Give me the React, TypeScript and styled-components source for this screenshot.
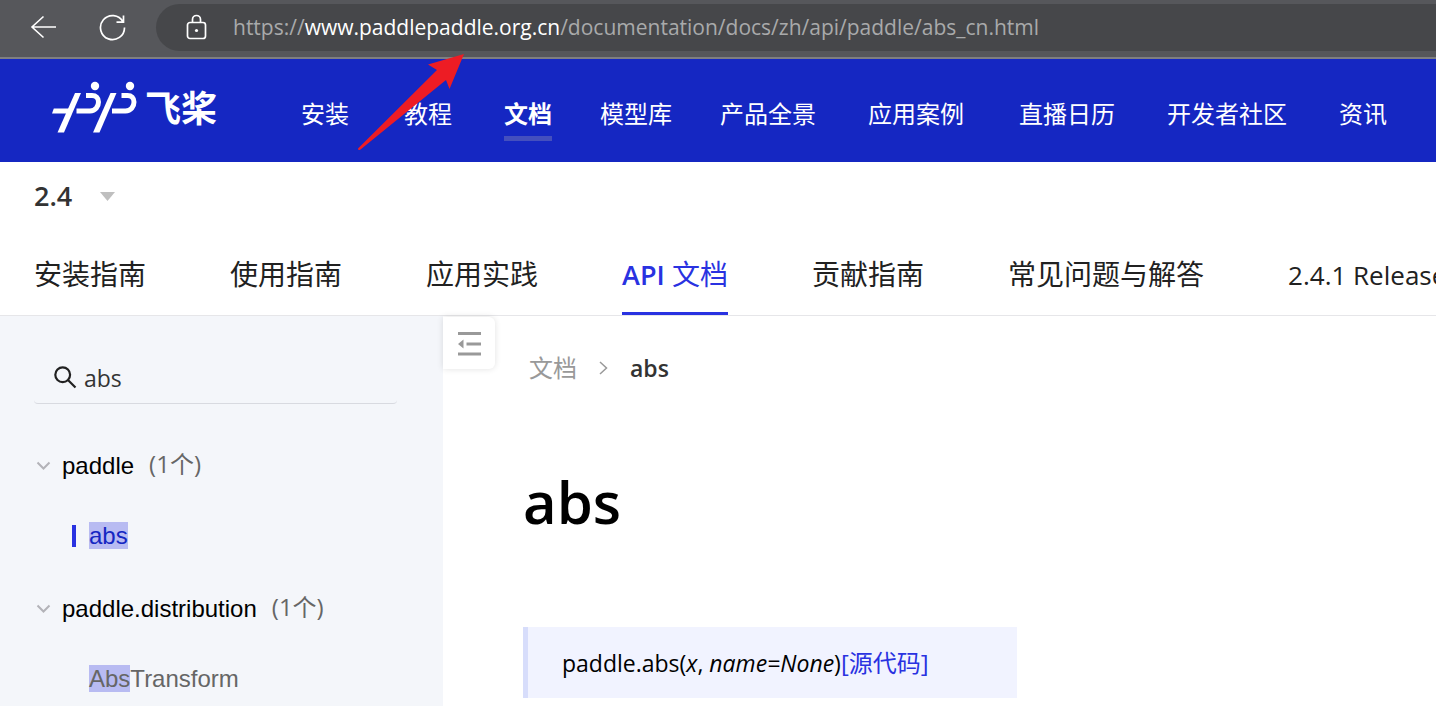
import React from 'react';
import styled, { createGlobalStyle } from 'styled-components';

const ui = '"Open Sans", "Noto Sans CJK SC", sans-serif';
const arial = '"Liberation Sans", "Noto Sans CJK SC", sans-serif';

const GlobalStyle = createGlobalStyle`
  *, *::before, *::after { box-sizing: border-box; }
  html, body, #root { height: 100%; }
  body {
    margin: 0;
    background: #fff;
    color: #212121;
    font-family: ${ui};
    overflow: hidden;
  }
  a { color: inherit; text-decoration: none; }
  button, input { font: inherit; color: inherit; }
  svg { display: block; }
`;

const Page = styled.div`
  display: flex;
  flex-direction: column;
  height: 100%;
  position: relative;
`;

const BrowserBar = styled.div`
  flex: none;
  display: flex;
  align-items: center;
  height: 59px;
  padding: 0 0 2px 29px;
  background: #56575b;
  border-bottom: 2px solid #7f7f81;
`;

const BarButton = styled.button`
  display: flex;
  align-items: center;
  flex: none;
  width: 69px;
  height: 40px;
  padding: 0 0 2px;
  border: 0;
  background: none;
  color: #fff;
`;

const AddressBox = styled.div`
  display: flex;
  align-items: center;
  flex: 1;
  min-width: 0;
  height: 47px;
  margin-left: -11px;
  padding: 0 0 2px 30px;
  gap: 26px;
  border-radius: 24px 0 0 24px;
  background: #46474a;
  color: #fff;
`;

const Address = styled.a`
  font-size: 21px;
  line-height: 32px;
  white-space: nowrap;
  color: #a9aaab;
`;

const Host = styled.span`
  color: #fff;
`;

const SiteHeader = styled.header`
  flex: none;
  display: flex;
  align-items: center;
  height: 103px;
  padding-left: 52px;
  background: #1527c2;
  color: #fff;
`;

const Brand = styled.a`
  display: flex;
  align-items: center;
  flex: none;
  width: 249px;
  gap: 8px;
  padding-bottom: 4px;
  font-size: 36px;
  line-height: 52px;
  font-weight: 700;
`;

const MainNav = styled.nav`
  display: grid;
  grid-template-columns: 103px 100px 96px 120px 148px 151px 148px 172px auto;
  padding-top: 14px;
`;

const MainLink = styled.a<{ $active?: boolean }>`
  justify-self: start;
  padding-bottom: 2px;
  font-size: 24px;
  line-height: 40px;
  white-space: nowrap;
  font-weight: ${(p) => (p.$active ? 700 : 400)};
  border-bottom: 5px solid ${(p) => (p.$active ? '#444fbe' : 'transparent')};
`;

const DocHeader = styled.div`
  flex: none;
  display: flex;
  flex-direction: column;
  height: 154px;
  padding-left: 34px;
  border-bottom: 1px solid #e6e6e9;
  overflow: hidden;
`;

const Version = styled.button`
  display: flex;
  align-items: center;
  align-self: flex-start;
  gap: 28px;
  height: 68px;
  padding: 0;
  border: 0;
  background: none;
  font-size: 27px;
  line-height: 36px;
  font-weight: 600;
  color: #333;
`;

const Tabs = styled.nav`
  display: flex;
  flex: 1;
  gap: 84px;
`;

const Tab = styled.a<{ $active?: boolean }>`
  flex: none;
  padding-top: 24px;
  font-size: 28px;
  line-height: 40px;
  white-space: nowrap;
  color: ${(p) => (p.$active ? '#2932e1' : '#212121')};
  border-bottom: 3px solid ${(p) => (p.$active ? '#2932e1' : 'transparent')};
`;

const Latin = styled.span<{ $strong?: boolean }>`
  font-size: ${(p) => (p.$strong ? 27 : 26)}px;
  font-weight: ${(p) => (p.$strong ? 600 : 400)};
`;

const Body = styled.div`
  display: flex;
  flex: 1;
  min-height: 0;
`;

const Sidebar = styled.aside`
  flex: none;
  width: 443px;
  padding: 36px 34px 0;
  background: #f4f6fa;
  overflow: hidden;
`;

const SearchBox = styled.label`
  display: flex;
  align-items: center;
  gap: 7px;
  width: 363px;
  height: 52px;
  padding-left: 20px;
  border-bottom: 1px solid #d8dae0;
  border-radius: 4px;
  color: #212121;
`;

const SearchInput = styled.input`
  flex: 1;
  min-width: 0;
  padding: 0;
  border: 0;
  outline: 0;
  background: none;
  font-size: 23px;
  line-height: 32px;
  color: #333;
`;

const Tree = styled.ul`
  margin: 0;
  padding: 26px 0 0;
  list-style: none;
  font-family: ${arial};
  font-size: 24px;
  line-height: 28px;
`;

const Group = styled.li`
  height: 143px;
`;

const GroupButton = styled.button`
  display: flex;
  align-items: center;
  height: 72px;
  padding: 0 0 0 2px;
  border: 0;
  background: none;
  color: #000;
`;

const GroupName = styled.span`
  margin-left: 11px;
`;

const Count = styled.span`
  margin-left: 15px;
  padding-bottom: 4px;
  font-family: ${ui};
  color: #666;
`;

const Leaf = styled.a<{ $active?: boolean }>`
  display: flex;
  align-items: center;
  height: 67px;
  padding-left: 38px;
  color: ${(p) => (p.$active ? '#1527c2' : '#666')};

  &::before {
    content: '';
    width: 4px;
    height: 22px;
    margin-right: 13px;
    background: ${(p) => (p.$active ? '#2932e1' : 'transparent')};
  }
`;

const Hit = styled.mark`
  background: #b8bbf2;
  color: inherit;
`;

const Content = styled.main`
  flex: 1;
  min-width: 0;
  display: flex;
  align-items: flex-start;
`;

const Collapse = styled.button`
  display: flex;
  align-items: center;
  justify-content: center;
  flex: none;
  width: 52px;
  height: 52px;
  margin-top: 1px;
  padding: 1px 1px 0 0;
  border: 0;
  border-radius: 0 6px 6px 0;
  background: #fff;
  box-shadow: 0 0 6px rgba(0, 0, 0, 0.12);
`;

const Article = styled.article`
  flex: 1;
  min-width: 0;
  padding: 36px 0 0 28px;
`;

const Crumbs = styled.nav`
  display: flex;
  align-items: center;
  gap: 21px;
  height: 32px;
  padding-left: 6px;
  font-size: 24px;
  line-height: 32px;
  color: #999;
`;

const Current = styled.span`
  font-size: 23px;
  font-weight: 600;
  color: #333;
`;

const Title = styled.h1`
  margin: 78px 0 0;
  font-size: 58px;
  line-height: 80px;
  font-weight: 600;
  color: #000;
`;

const Signature = styled.div`
  width: 494px;
  max-width: 100%;
  margin-top: 85px;
  padding: 16px 0 15px 34px;
  border-left: 5px solid #d7ddfb;
  background: #f1f3ff;
  font-size: 23px;
  line-height: 40px;
  white-space: nowrap;
  color: #000;
`;

const SourceLink = styled.a`
  font-size: 24px;
  color: #2932e1;
`;

const Pointer = styled.svg`
  position: absolute;
  left: 350px;
  top: 48px;
  pointer-events: none;
`;

const BackIcon = () => (
  <svg width="28" height="28" viewBox="0 0 28 28" fill="none" stroke="currentColor" strokeWidth="1.6">
    <path d="M27 14H3M14.5 3.5L3 14l11.5 10.5" />
  </svg>
);

const ReloadIcon = () => (
  <svg width="28" height="28" viewBox="0 0 28 28" fill="none" stroke="currentColor" strokeWidth="1.7">
    <path d="M26.5 14.5A12 12 0 1 1 25 8.8M25.5 2.5V9.2H18.5" />
  </svg>
);

const LockIcon = () => (
  <svg width="21" height="26" viewBox="0 0 21 26" fill="none" stroke="currentColor" strokeWidth="1.7">
    <rect x="1.5" y="8.5" width="18" height="16" rx="2.5" />
    <path d="M6.5 8.5V5.5a4 4 0 0 1 8 0v3" />
    <circle cx="10.5" cy="16.5" r="1.6" fill="currentColor" stroke="none" />
  </svg>
);

const BrandMark = () => (
  <svg width="85" height="56" viewBox="0 0 85 56" fill="none" stroke="#fff" strokeWidth="5">
    <path d="M0 32.500L1.800 27.500H17L15 32.500Z" fill="#fff" stroke="none" />
    <path d="M23 12H29L12 51.500H5.500Z" fill="#fff" stroke="none" />
    <path d="M58.500 12H64.500L47.500 51.500H41Z" fill="#fff" stroke="none" />
    <path d="M24.500 30H38C43.500 30 46.500 25.500 46.500 21C46.500 17 44 14.500 40 14.500H34" />
    <path d="M60 30H73.500C79 30 82 25.500 82 21C82 17 79.500 14.500 75.500 14.500H69.500" />
    <circle cx="43" cy="5" r="4.200" fill="#fff" stroke="none" />
    <circle cx="78" cy="5" r="4.200" fill="#fff" stroke="none" />
  </svg>
);

const CaretIcon = () => (
  <svg width="15" height="9" viewBox="0 0 15 9">
    <path d="M0 0H15L7.5 9Z" fill="#bfbfbf" />
  </svg>
);

const SearchIcon = () => (
  <svg width="23" height="23" viewBox="0 0 23 23" fill="none" stroke="currentColor" strokeWidth="2.2">
    <circle cx="8.7" cy="8.7" r="7.4" />
    <path d="M14 14L21.5 21.5" />
  </svg>
);

const ChevronDown = () => (
  <svg width="15" height="10" viewBox="0 0 15 10" fill="none" stroke="#b3b3b8" strokeWidth="2">
    <path d="M1.5 1.5L7.5 7.5L13.5 1.5" />
  </svg>
);

const ChevronRight = () => (
  <svg width="11" height="14" viewBox="0 0 11 14" fill="none" stroke="#999" strokeWidth="1.5">
    <path d="M2 1L8.5 7L2 13" />
  </svg>
);

const FoldIcon = () => (
  <svg width="24" height="24" viewBox="0 0 24 24" fill="#999">
    <path d="M1 0H24V3H1ZM9.5 10.5H24V13.5H9.5ZM1 20.500H24V23.5H1ZM1 12L6.500 7.500V16.500Z" />
  </svg>
);

const mainLinks = ['安装', '教程', '文档', '模型库', '产品全景', '应用案例', '直播日历', '开发者社区', '资讯'];

const groups = [
  { name: 'paddle', hit: 'abs', rest: '', active: true },
  { name: 'paddle.distribution', hit: 'Abs', rest: 'Transform', active: false },
];

export default function App() {
  return (
    <Page>
      <GlobalStyle />
      <BrowserBar>
        <BarButton aria-label="返回"><BackIcon /></BarButton>
        <BarButton aria-label="刷新"><ReloadIcon /></BarButton>
        <AddressBox>
          <LockIcon />
          <Address href="#">
            https://<Host>www.paddlepaddle.org.cn</Host>/documentation/docs/zh/api/paddle/abs_cn.html
          </Address>
        </AddressBox>
      </BrowserBar>
      <SiteHeader>
        <Brand href="#"><BrandMark />飞桨</Brand>
        <MainNav>
          {mainLinks.map((label) => (
            <MainLink key={label} href="#" $active={label === '文档'}>{label}</MainLink>
          ))}
        </MainNav>
      </SiteHeader>
      <DocHeader>
        <Version>2.4<CaretIcon /></Version>
        <Tabs>
          <Tab href="#">安装指南</Tab>
          <Tab href="#">使用指南</Tab>
          <Tab href="#">应用实践</Tab>
          <Tab href="#" $active><Latin $strong>API</Latin> 文档</Tab>
          <Tab href="#">贡献指南</Tab>
          <Tab href="#">常见问题与解答</Tab>
          <Tab href="#"><Latin>2.4.1 Release</Latin></Tab>
        </Tabs>
      </DocHeader>
      <Body>
        <Sidebar>
          <SearchBox>
            <SearchIcon />
            <SearchInput type="text" aria-label="搜索" defaultValue="abs" />
          </SearchBox>
          <Tree>
            {groups.map((g) => (
              <Group key={g.name}>
                <GroupButton>
                  <ChevronDown />
                  <GroupName>{g.name}</GroupName>
                  <Count>(1个)</Count>
                </GroupButton>
                <Leaf href="#" $active={g.active}>
                  <span><Hit>{g.hit}</Hit>{g.rest}</span>
                </Leaf>
              </Group>
            ))}
          </Tree>
        </Sidebar>
        <Content>
          <Collapse aria-label="收起目录"><FoldIcon /></Collapse>
          <Article>
            <Crumbs>
              <a href="#">文档</a>
              <ChevronRight />
              <Current>abs</Current>
            </Crumbs>
            <Title>abs</Title>
            <Signature>
              paddle.abs(<em>x</em>, <em>name=None</em>)<SourceLink href="#">[源代码]</SourceLink>
            </Signature>
          </Article>
        </Content>
      </Body>
      <Pointer width="120" height="106" viewBox="0 0 120 106" aria-hidden="true">
        <path d="M114 6L99.500 41L96 32L10.500 101.500Q8 103 8 100.500L87 22L78 16.500Z" fill="#ed1c24" />
      </Pointer>
    </Page>
  );
}
